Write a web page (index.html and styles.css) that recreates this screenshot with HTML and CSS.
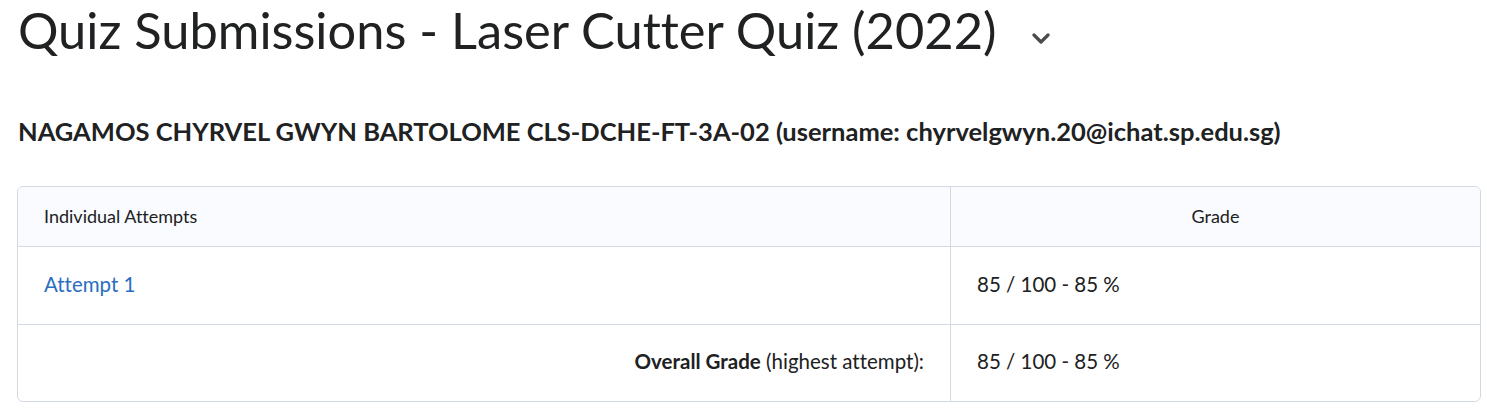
FILE: index.html
```html
<!DOCTYPE html>
<html>
<head>
<meta charset="utf-8">
<link rel="stylesheet" href="styles.css">
</head>
<body>
<div class="page">
  <div class="title-row">
    <h1 class="title">Quiz Submissions - Laser Cutter Quiz (2022)</h1>
    <svg class="chev" width="18" height="12" viewBox="0 0 18 12"><path d="M2 2 L9 9 L16 2" fill="none" stroke="#494c4e" stroke-width="3.2" stroke-linecap="round" stroke-linejoin="round"/></svg>
  </div>
  <h2 class="user">NAGAMOS CHYRVEL GWYN BARTOLOME CLS-DCHE-FT-3A-02 (username: chyrvelgwyn.20@ichat.sp.edu.sg)</h2>
  <div class="table">
    <div class="row head">
      <div class="cell c1">Individual Attempts</div>
      <div class="cell c2 center">Grade</div>
    </div>
    <div class="row">
      <div class="cell c1"><a class="link" href="#">Attempt 1</a></div>
      <div class="cell c2">85 / 100 - 85 %</div>
    </div>
    <div class="row last">
      <div class="cell c1 right"><b>Overall Grade</b>&nbsp;(highest attempt):</div>
      <div class="cell c2">85 / 100 - 85 %</div>
    </div>
  </div>
</div>
</body>
</html>
```
FILE: styles.css
```css
html, body { margin: 0; padding: 0; background: #fff; }
body { font-family: Lato, "Open Sans", sans-serif; color: #202122; font-variant-ligatures: none; }
.page { padding: 0 6px 0 18px; }
.title-row { display: flex; align-items: center; height: 62px; gap: 35px; }
.title { margin: 0; font-weight: 400; font-size: 50.6px; line-height: 62px; color: #202122; margin-top: -3px; }
.chev { margin-top: 16px; }
.user { margin: 54px 0 0 0; font-size: 25.5px; font-weight: 700; line-height: 30px; color: #202122; }
.table { margin: 40px 0 0 -1px; border: 1px solid #d3d9e3; border-radius: 6px; overflow: hidden; }
.row { display: grid; grid-template-columns: 932px 1fr; border-top: 1px solid #d3d9e3; height: 77px; }
.row.head { border-top: 0; height: 59px; background: #f9fbff; }
.row.last { height: 76px; }
.cell { display: flex; align-items: center; padding: 0 26px 4px; font-size: 20.5px; }
.head .cell { font-size: 18px; padding-bottom: 2px; }
.c2 { border-left: 1px solid #d3d9e3; }
.center { justify-content: center; }
.right { justify-content: flex-end; }
.right b { font-weight: 700; }
.link { color: #2a6ebf; text-decoration: none; }
```
